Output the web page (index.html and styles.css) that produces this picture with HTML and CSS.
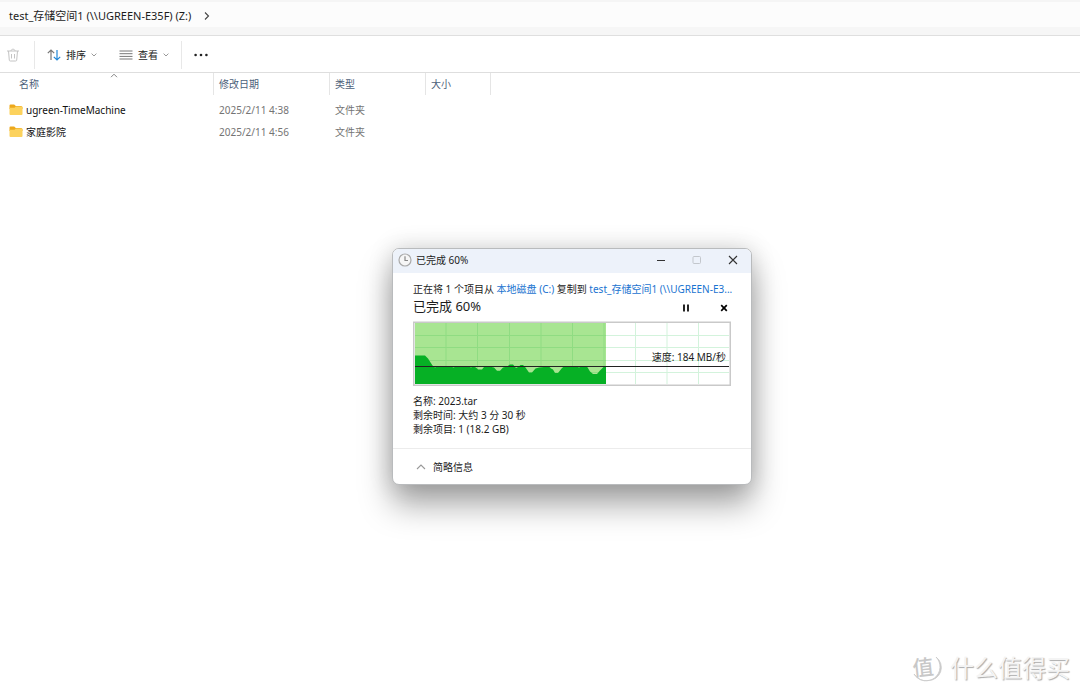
FILE: index.html
```html
<!DOCTYPE html>
<html lang="zh-CN">
<head>
<meta charset="utf-8">
<title>test_存储空间1 (Z:)</title>
<link rel="stylesheet" href="styles.css">
</head>
<body>
<div class="explorer">
  <nav class="address">
    <span class="path">test_存储空间1 (\\UGREEN-E35F) (Z:)</span>
    <svg class="path-arrow" width="8" height="10" viewBox="0 0 8 10"><path d="M2 1.5 5.5 5 2 8.5" fill="none" stroke="#444" stroke-width="1.1"/></svg>
  </nav>
  <div class="toolbar">
    <button class="tool trash" aria-label="删除">
      <svg width="14" height="14" viewBox="0 0 14 14" fill="none" stroke="#c4c4c4" stroke-width="1"><path d="M1 3h12M5 3c0-2.400 4-2.400 4 0M2.500 3l.8 9.200q.1.800 1 .8h5.400q.9 0 1-.8L11.500 3M5.500 6v4.500M8.500 6v4.500"/></svg>
    </button>
    <button class="tool sort">
      <svg width="14" height="12" viewBox="0 0 14 12" fill="none" stroke-width="1.2"><path d="M4 11V1M.8 4.200 4 1l3.200 3.200" stroke="#777"/><path d="M10 1v10M6.800 7.800 10 11l3.200-3.200" stroke="#2288d8"/></svg>
      <span>排序</span>
      <svg class="caret" width="6" height="4" viewBox="0 0 6 4"><path d="M.6.600 3 3 5.400.6" fill="none" stroke="#999" stroke-width="1"/></svg>
    </button>
    <button class="tool view">
      <svg width="14" height="10" viewBox="0 0 14 10"><path d="M.5 1h13M.5 3.700h13M.5 6.400h13M.5 9h13" stroke="#777" stroke-width="1"/></svg>
      <span>查看</span>
      <svg class="caret" width="6" height="4" viewBox="0 0 6 4"><path d="M.6.600 3 3 5.400.6" fill="none" stroke="#999" stroke-width="1"/></svg>
    </button>
    <button class="tool more" aria-label="更多">
      <svg width="14" height="4" viewBox="0 0 14 4" fill="#222"><circle cx="1.600" cy="2" r="1.300"/><circle cx="7" cy="2" r="1.300"/><circle cx="12.400" cy="2" r="1.300"/></svg>
    </button>
  </div>
  <table class="files">
    <colgroup><col class="c-name"><col class="c-date"><col class="c-type"><col class="c-size"><col></colgroup>
    <thead>
      <tr>
        <th class="name">名称<svg class="sorted" width="8" height="5" viewBox="0 0 8 5"><path d="M1 4.200 4 1.200 7 4.200" fill="none" stroke="#777" stroke-width=".9"/></svg></th>
        <th>修改日期</th><th>类型</th><th>大小</th><td></td>
      </tr>
    </thead>
    <tbody>
      <tr>
        <td class="name"><svg class="folder" width="14" height="12" viewBox="0 0 14 12"><path d="M1.500.5h3.700L6.800 2H12q1.500 0 1.500 1.500V5H.5V1.500q0-1 1-1Z" fill="#eda81c"/><path d="M.5 3.800h5l1.300-1.200h5.700q1 0 1 1v6.400q0 1-1 1h-11q-1 0-1-1Z" fill="#fcd25d"/></svg><span>ugreen-TimeMachine</span></td>
        <td>2025/2/11 4:38</td><td>文件夹</td><td></td><td></td>
      </tr>
      <tr>
        <td class="name"><svg class="folder" width="14" height="12" viewBox="0 0 14 12"><path d="M1.500.5h3.700L6.800 2H12q1.500 0 1.500 1.500V5H.5V1.500q0-1 1-1Z" fill="#eda81c"/><path d="M.5 3.800h5l1.300-1.200h5.700q1 0 1 1v6.400q0 1-1 1h-11q-1 0-1-1Z" fill="#fcd25d"/></svg><span>家庭影院</span></td>
        <td>2025/2/11 4:56</td><td>文件夹</td><td></td><td></td>
      </tr>
    </tbody>
  </table>
</div>

<section class="dialog" role="dialog" aria-label="已完成 60%">
  <header class="titlebar">
    <svg width="14" height="14" viewBox="0 0 14 14" fill="none"><circle cx="7" cy="7" r="6" fill="#f6f6f6" stroke="#aaa" stroke-width="1.200"/><path d="M7 3.200V7.500H10" stroke="#888" stroke-width="1.200"/></svg>
    <span class="title">已完成 60%</span>
    <button aria-label="最小化"><svg width="10" height="10" viewBox="0 0 10 10"><path d="M1 5.500h8" stroke="#333"/></svg></button>
    <button aria-label="最大化" disabled><svg width="10" height="10" viewBox="0 0 10 10"><rect x="1" y="1.500" width="7.500" height="7" rx="1" fill="none" stroke="#c3c7cc"/></svg></button>
    <button aria-label="关闭"><svg width="10" height="10" viewBox="0 0 10 10"><path d="M1 1l8 8M9 1 1 9" stroke="#333" stroke-width="1.100"/></svg></button>
  </header>
  <div class="content">
    <p class="route">正在将 1 个项目从 <a href="#">本地磁盘 (C:)</a> 复制到 <a href="#">test_存储空间1 (\\UGREEN-E3...</a></p>
    <div class="status">
      <h1>已完成 60%</h1>
      <button aria-label="暂停"><svg width="8" height="8" viewBox="0 0 8 8"><path d="M2 .5v7M6 .5v7" stroke="#000" stroke-width="1.700"/></svg></button>
      <button aria-label="取消"><svg width="8" height="8" viewBox="0 0 8 8"><path d="M1.200 1.200l5.600 5.600M6.800 1.200 1.200 6.800" stroke="#000" stroke-width="1.700"/></svg></button>
    </div>
    <div class="chart">
      <svg viewBox="0 0 318 65" preserveAspectRatio="none">
        <rect x=".75" y="1.250" width="316.500" height="63" fill="#fff" stroke="#c9c9c9" stroke-width="1.500"/>
        <path d="M222.500 2v61M254 2v61M285.500 2v61M193 14.500h123M193 26.500h123M193 39.500h123M193 51.500h123" stroke="#d3f3dc"/>
        <rect x="2" y="2" width="191" height="61" fill="#a8e592"/>
        <path d="M33 2v61M64.500 2v61M96.500 2v61M128 2v61M159.500 2v61M191 2v61M2 14.500h191M2 26.500h191M2 39.500h191M2 51.500h191" stroke="#8fdc82"/>
        <path d="M2 63V34.500H12L15 37.500 19.500 44.500 22 46.500 24 45.500H38L40.500 46.500 43 45.500H56L58 46.500 60 45.500 63 46.500 65 48.500H69L71 46 76 45.500 81 46.500 84 49.700H87L90 46.500 94 45.500 97 43.500H100L103 47 106 45.500 107.500 44H110L112.500 46.500 116 51.500H119L122.500 47.500 126 46.500 136 45.500 138 47.500 140 48.500 142 52H145L149 47 151 45.500H164L166 46.500 168 45.500H174L177 50.500 180 53H184L187 49.500 190.500 46 193 45.500V63Z" fill="#06b025"/>
        <path d="M2 45.500h314" stroke="#222"/>
      </svg>
      <span class="speed">速度: 184 MB/秒</span>
    </div>
    <div class="details">
      <p>名称: 2023.tar</p>
      <p>剩余时间: 大约 3 分 30 秒</p>
      <p>剩余项目: 1 (18.2 GB)</p>
    </div>
  </div>
  <footer>
    <button class="less"><svg width="10" height="8" viewBox="0 0 10 8"><path d="M1 6 5 2l4 4" fill="none" stroke="#999" stroke-width="1.100"/></svg><span>简略信息</span></button>
  </footer>
</section>

<div class="watermark">
  <svg width="32" height="36" viewBox="0 0 32 36" fill="none"><path d="M26 8A14 14 0 1 1 4 25Q10 33 18 31.500A13 13 0 0 0 26 8Z" fill="#cacaca" stroke="#cacaca" stroke-width=".8"/><text x="13" y="26" text-anchor="middle" transform="rotate(-6 14 18)">值</text></svg>
  <span>什么值得买</span>
</div>
</body>
</html>
```
FILE: styles.css
```css
* { box-sizing: border-box; }
body {
  margin: 0;
  min-height: 100vh;
  background: #fff;
  color: #1c1c1c;
  font: 10px/14px "Noto Sans", "Noto Sans CJK SC", sans-serif;
}
p, h1 { margin: 0; font-weight: 400; }
svg { display: block; flex: none; }
button { display: flex; align-items: center; justify-content: center; padding: 0; border: 0; background: none; color: inherit; font: inherit; }
a { color: #1a73d0; text-decoration: none; }

.address {
  display: flex;
  align-items: center;
  gap: 12px;
  height: 36px;
  padding: 0 9px 4px;
  border-bottom: 1px solid #dfdfdf;
  background: linear-gradient(#f5f5f5 0 2px, #fcfcfc 2px 27px, #f6f6f6 27px);
  font-size: 11px;
}
.toolbar { display: flex; align-items: center; height: 37px; padding-top: 1px; border-bottom: 1px solid #dedede; }
.tool { height: 28px; }
.trash { width: 35px; padding-right: 9px; border-right: 1px solid #e8e8e8; }
.sort { gap: 5px; padding-left: 12px; }
.view { gap: 5px; padding: 0 12px 0 22px; border-right: 1px solid #e8e8e8; }
.more { padding-left: 12px; }

.files { width: 100%; table-layout: fixed; border-collapse: separate; border-spacing: 0; color: #747474; }
.c-name { width: 214px; }
.c-date { width: 116px; }
.c-type { width: 96px; }
.c-size { width: 65px; }
.files th, .files td { padding: 0 5px; text-align: left; font-weight: 400; }
.files th { position: relative; height: 22px; border-right: 1px solid #e5e5e5; color: #4c607a; }
.files th.name { padding-left: 19px; }
.sorted { position: absolute; left: 110px; top: 0; }
.files tbody td { height: 22px; }
.files tbody tr:first-child td { height: 26px; padding-top: 4px; }
.files td.name { padding-left: 9px; color: #111; }
.folder { display: inline-block; margin-right: 3px; vertical-align: -2px; }

.dialog {
  position: absolute;
  left: 392px;
  top: 248px;
  width: 360px;
  border: 1px solid #b9bbbd;
  border-radius: 7px;
  background: #fff;
  box-shadow: 0 20px 32px rgba(0, 0, 0, .34), 0 0 24px rgba(0, 0, 0, .16);
}
.titlebar { display: flex; align-items: center; height: 24px; padding: 0 0 2px 5px; border-radius: 6px 6px 0 0; background: #edf2fa; }
.titlebar .title { flex: 1; margin-left: 4px; }
.titlebar button { width: 36px; height: 22px; }
.content { padding: 9px 20px 12px; }
.route { white-space: nowrap; }
.status { display: flex; align-items: center; height: 20px; gap: 30px; padding-right: 3px; }
.status h1 { flex: 1; font-size: 13px; line-height: 20px; }
.status button { padding-top: 3px; }
.chart { position: relative; margin: 5px 0 8px; }
.chart svg { width: 100%; height: 65px; }
.speed { position: absolute; right: 5px; top: 29px; }
footer { display: flex; height: 36px; padding-left: 23px; border-top: 1px solid #ececec; }
.less { gap: 7px; }

.watermark {
  position: absolute;
  right: 10px;
  bottom: 8px;
  display: flex;
  align-items: center;
  gap: 8px;
  color: #f4f4f4;
  font: 24px/36px "Noto Sans CJK SC", sans-serif;
  text-shadow: 1px 1px 1px #aaa;
}
.watermark svg { overflow: visible; }
.watermark text { fill: #c8c8c8; font-size: 21px; font-weight: 500; text-shadow: none; }
```
